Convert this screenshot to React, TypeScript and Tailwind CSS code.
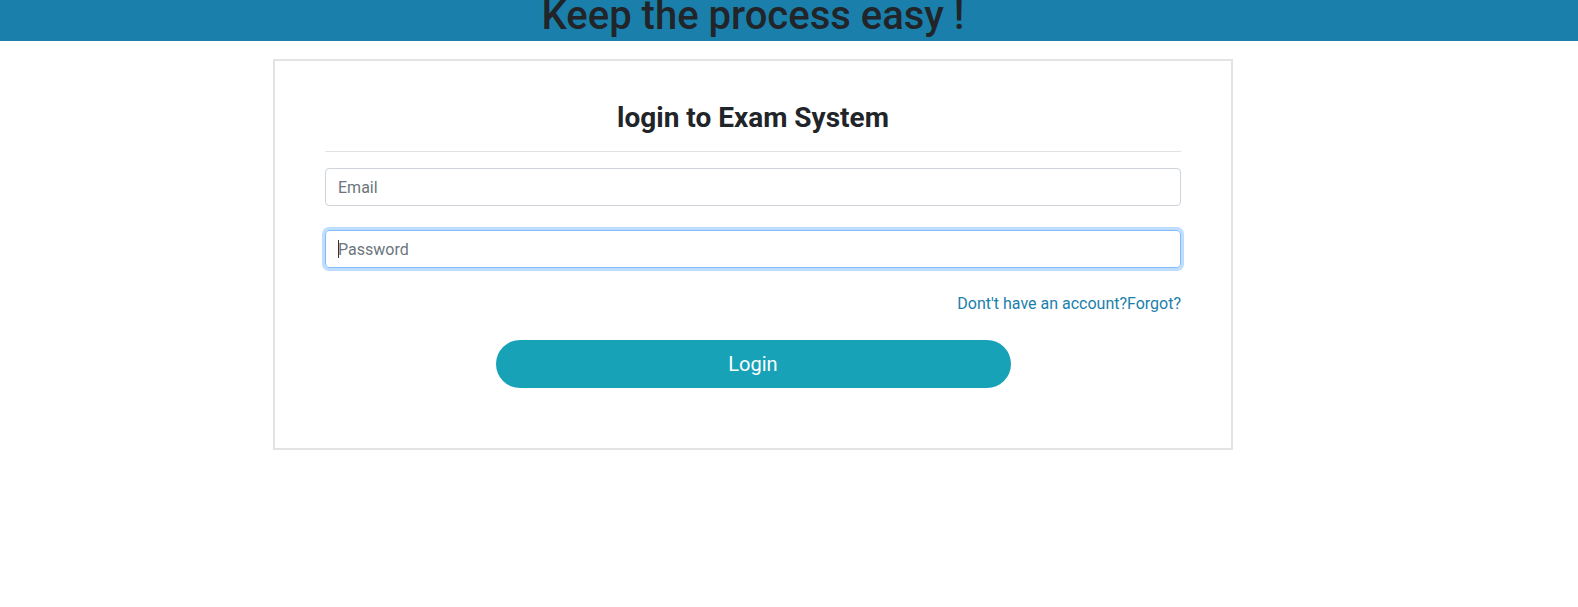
import React from 'react';

export default function App() {
    return (
        <div className="min-h-screen bg-white text-[#212529] font-['Roboto',sans-serif]">
            <header className="flex h-[41px] bg-[#1a80ab]">
                <div className="w-[960px] ml-[273px] -mt-[8px]">
                    <h1 className="text-center text-[40px] leading-[48px] font-medium">
                        Keep the process easy !
                    </h1>
                </div>
            </header>

            <div className="w-[960px] ml-[273px] mt-[18px] border-2 border-[#e3e3e3] px-[50px] pt-[40px] pb-[60px]">
                <h3 className="text-center text-[28px] leading-[34px] font-bold">login to Exam System</h3>
                <hr className="mt-4 mb-4 border-0 border-t border-[#e1e1e1]" />

                <form className="space-y-6" onSubmit={(e) => e.preventDefault()}>
                    <input
                        type="email"
                        placeholder="Email"
                        className="block w-full h-[38px] rounded border border-[#ced4da] px-3 text-base text-[#495057] placeholder:text-[#6c757d] focus:outline-none"
                    />
                    <div className="relative">
                        <input
                            type="password"
                            placeholder="Password"
                            className="block w-full h-[38px] rounded border border-[#80bdff] px-3 text-base text-[#495057] placeholder:text-[#6c757d] shadow-[0_0_0_3px_rgba(0,123,255,0.25)] focus:outline-none"
                        />
                        {/* caret */}
                        <span className="absolute left-[13px] top-[10px] h-[18px] w-px bg-[#333]" />
                    </div>

                    <div className="flex justify-end">
                        <a href="#" className="text-base leading-6 text-[#1a80ab] hover:underline">
                            Dont't have an account?Forgot?
                        </a>
                    </div>

                    <div className="flex justify-center">
                        <button
                            type="submit"
                            className="w-[515px] h-[48px] rounded-full bg-[#17a2b8] text-white text-xl"
                        >
                            Login
                        </button>
                    </div>
                </form>
            </div>
        </div>
    );
}
